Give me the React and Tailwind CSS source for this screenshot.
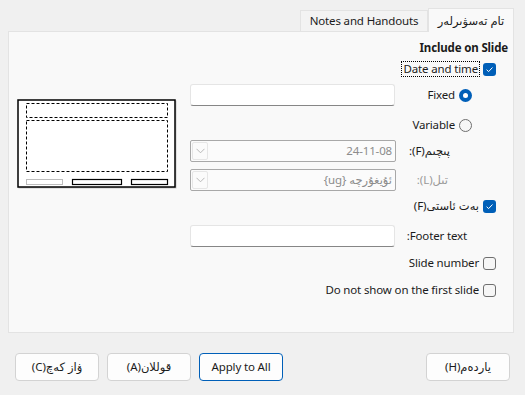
import React from 'react';

const font = { fontFamily: '"Noto Sans", "DejaVu Sans", sans-serif' };

const Check = ({ checked }) =>
  checked ? (
    <span className="flex h-[13px] w-[13px] shrink-0 items-center justify-center rounded-[3px] bg-[#005fb8]">
      <svg width="9" height="9" viewBox="0 0 9 9">
        <path d="M1.6 4.7 L3.6 6.6 L7.5 2.5" stroke="white" strokeWidth="1" fill="none" />
      </svg>
    </span>
  ) : (
    <span className="h-[13px] w-[13px] shrink-0 rounded-[3px] border border-[#6f6f6f] bg-[#f6f6f6]" />
  );

const Radio = ({ checked }) =>
  checked ? (
    <span className="flex h-[13px] w-[13px] shrink-0 items-center justify-center rounded-full bg-[#005fb8]">
      <span className="h-[5px] w-[5px] rounded-full bg-white" />
    </span>
  ) : (
    <span className="h-[13px] w-[13px] shrink-0 rounded-full border border-[#6f6f6f] bg-[#f6f6f6]" />
  );

const TextBox = () => (
  <div className="h-[22px] w-[205px] shrink-0 rounded-[3px] border border-[#e5e5e5] border-b-[#868686] bg-white" />
);

const Combo = ({ value }) => (
  <div className="flex h-[22px] w-[206px] shrink-0 items-center rounded-[2px] border border-[#a8a8a8] bg-[#fbfbfb]">
    <div className="ml-[1px] flex h-[18px] w-[16px] items-center justify-center rounded-[2px] border border-[#e6e6e6]">
      <svg width="9" height="6" viewBox="0 0 9 6">
        <path d="M0.5 0.8 L4.5 4.8 L8.5 0.8" stroke="#b8b8b8" strokeWidth="1" fill="none" />
      </svg>
    </div>
    <span dir="rtl" className="flex-1 pr-[3px] text-right text-[#8c8c8c]">
      {value}
    </span>
  </div>
);

const Button = ({ children, primary, className = '' }) => (
  <button
    dir="rtl"
    className={`h-[28px] w-[84px] rounded-[4px] border bg-[#fdfdfd] text-[#1b1b1b] ${
      primary ? 'border-[#005fb8]' : 'border-[#d3d3d3]'
    } ${className}`}
  >
    {children}
  </button>
);

const Preview = () => (
  <svg width="160" height="90" viewBox="0 0 160 90">
    <rect x="1.5" y="1.5" width="158" height="88" fill="#c8c8c8" />
    <rect x="1" y="1" width="157" height="87" fill="white" stroke="black" strokeWidth="1.5" />
    <rect x="9.5" y="4.5" width="141" height="14" fill="none" stroke="black" strokeWidth="1" strokeDasharray="3 2" />
    <rect x="9.5" y="21.5" width="141" height="51" fill="none" stroke="black" strokeWidth="1" strokeDasharray="3 2" />
    <rect x="9.5" y="80.5" width="36" height="5" fill="none" stroke="#bdbdbd" strokeWidth="1" />
    <rect x="55.5" y="80.5" width="49" height="5" fill="none" stroke="black" strokeWidth="1.2" />
    <rect x="114.5" y="80.5" width="36" height="5" fill="none" stroke="black" strokeWidth="1.2" />
  </svg>
);

export default function App() {
  return (
    <div
      className="h-[395px] w-[525px] overflow-hidden bg-[#f0f0f0] text-[11.5px] tracking-[-0.15px] text-[#1b1b1b]"
      style={font}
    >
      <div className="flex h-[31px] items-end justify-end pr-[11px] pt-[8px]">
        <div className="flex h-[21px] w-[128px] items-center justify-center border border-b-0 border-[#e3e3e3] bg-[#f3f3f3]">
          Notes and Handouts
        </div>
        <div
          dir="rtl"
          className="relative -mb-[1px] flex h-[24px] w-[86px] items-center justify-center border border-b-0 border-[#e3e3e3] bg-[#f9f9f9]"
        >
          تام تەسۋىرلەر
        </div>
      </div>

      <div className="mx-[8px] flex h-[302px] w-[506px] border border-[#e3e3e3] bg-[#f9f9f9]">
        <div className="w-[172px] shrink-0 pl-[8px] pt-[67px]">
          <Preview />
        </div>

        <div className="flex flex-1 flex-col pl-[9px]">
          <div className="mt-[8px] flex h-[16px] items-center justify-end pr-[5px] font-bold">Include on Slide</div>

          <div className="mt-[4px] flex h-[18px] items-center justify-end pr-[17px]">
            <span className="mr-[3px] border border-dotted border-black px-[1px] leading-[14px]">Date and time</span>
            <Check checked />
          </div>

          <div className="mt-[6px] flex h-[22px] items-center">
            <TextBox />
            <div className="flex flex-1 items-center justify-end pr-[41px]">
              <span className="mr-[4px]">Fixed</span>
              <Radio checked />
            </div>
          </div>

          <div className="mt-[10px] flex h-[18px] items-center justify-end pr-[41px]">
            <span className="mr-[4px]">Variable</span>
            <Radio />
          </div>

          <div className="mt-[6px] flex h-[22px] items-center">
            <Combo value="24-11-08" />
            <div className="flex flex-1 justify-end pr-[63px]">
              <span dir="rtl">پىچىم(F):</span>
            </div>
          </div>

          <div className="mt-[7px] flex h-[22px] items-center">
            <Combo value="ئۇيغۇرچە {ug}" />
            <div className="flex flex-1 justify-end pr-[65px]">
              <span dir="rtl" className="text-[#9a9a9a]">
                تىل(L):
              </span>
            </div>
          </div>

          <div className="mt-[6px] flex h-[18px] items-center justify-end pr-[17px]">
            <span dir="rtl" className="mr-[4px]">
              بەت ئاستى(F)
            </span>
            <Check checked />
          </div>

          <div className="mt-[10px] flex h-[22px] items-center">
            <TextBox />
            <div className="flex flex-1 justify-end pr-[46px]">
              <span dir="rtl">Footer text:</span>
            </div>
          </div>

          <div className="mt-[7px] flex h-[18px] items-center justify-end pr-[17px]">
            <span className="mr-[4px]">Slide number</span>
            <Check />
          </div>

          <div className="mt-[9px] flex h-[18px] items-center justify-end pr-[17px]">
            <span className="mr-[4px]">Do not show on the first slide</span>
            <Check />
          </div>
        </div>
      </div>

      <div className="mt-[20px] flex items-center px-[15px]">
        <Button>ۋاز كەچ(C)</Button>
        <Button className="ml-[8px]">قوللان(A)</Button>
        <Button primary className="ml-[8px]">
          Apply to All
        </Button>
        <div className="flex-1" />
        <Button>ياردەم(H)</Button>
      </div>
    </div>
  );
}
